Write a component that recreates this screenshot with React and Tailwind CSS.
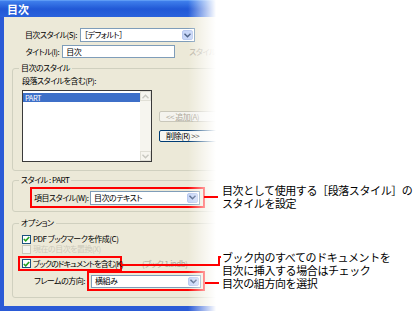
import React from "react";

const jp = "font-['Noto_Sans_CJK_JP',sans-serif]";
const palt = "[font-feature-settings:'palt']";

function Chevron({ up, color = "#4d6185" }) {
  return (
    <svg width="7" height="5" viewBox="0 0 7 5">
      <path
        d={up ? "M0.5 4.2 L3.5 1.2 L6.5 4.2" : "M0.5 0.8 L3.5 3.8 L6.5 0.8"}
        fill="none"
        stroke={color}
        strokeWidth="1.4"
      />
    </svg>
  );
}

function Select({ w, text, h = "h-[14px]" }) {
  return (
    <div className={`flex ${h} ${w} shrink-0 items-center border border-[#7f9db9] bg-white`}>
      <span className="flex-1 pl-[3px] whitespace-nowrap text-black">{text}</span>
      <span className="mr-[1px] flex h-[calc(100%-2px)] w-[11px] items-center justify-center rounded-[2px] border border-[#b9c9ef] bg-[#c7d6f8]">
        <Chevron />
      </span>
    </div>
  );
}

function Check({ on, disabled }) {
  return (
    <span
      className={`flex h-[9px] w-[9px] shrink-0 items-center justify-center border ${
        disabled ? "border-[#cac8bb] bg-[#f4f3ee]" : "border-[#1c5180] bg-white"
      }`}
    >
      {on && (
        <svg width="7" height="6" viewBox="0 0 7 6">
          <path d="M0.8 3 L2.7 4.8 L6.2 1" fill="none" stroke="#21a121" strokeWidth="1.6" />
        </svg>
      )}
    </span>
  );
}

// group box: title sits on the top border
function Group({ title, className, children }) {
  return (
    <div className={`ml-[8px] w-[240px] shrink-0 rounded-[3px] border border-[#d0d0bf] pl-[6px] ${className}`}>
      <div className="-mt-[6px] h-[10px] w-fit bg-[#ece9d8] px-[2px] whitespace-nowrap text-black">{title}</div>
      {children}
    </div>
  );
}

export default function App() {
  return (
    <div className={`relative flex h-[311px] w-[416px] overflow-hidden bg-white ${jp}`}>
      <div className="relative flex h-full w-[216px] shrink-0 flex-col overflow-hidden">
        <div className="flex h-[17px] shrink-0 items-center border-t border-[#5d9bf5] bg-linear-to-b from-[#3f7fec] via-[#2158d6] to-[#2a62dc] pl-[7px] text-[11px] font-bold text-white">
          目次
        </div>
        <div
          className={`flex flex-1 flex-col border-b-[5px] border-l-4 border-[#2a5ad6] bg-[#ece9d8] text-[8px] leading-[10px] tracking-[-0.5px] ${palt}`}
        >
          <div className="mt-[11px] flex items-center">
            <span className="w-[76px] pr-[3px] text-right whitespace-nowrap">目次スタイル(S):</span>
            <Select w="w-[115px]" text="［デフォルト］" />
          </div>
          <div className="mt-[3px] flex items-center">
            <span className="w-[76px] pr-[3px] text-right whitespace-nowrap">タイトル(I):</span>
            <div className="flex h-[13px] w-[113px] shrink-0 items-center border border-[#7f9db9] bg-white pl-[3px]">目次</div>
            <span className="ml-[14px] whitespace-nowrap text-[#aca899]">スタイル</span>
          </div>

          <Group title="目次のスタイル" className="mt-[10px] pb-[8px]">
            <div className="pl-[3px]">
              <div className="mt-[3px] whitespace-nowrap">段落スタイルを含む(P):</div>
              <div className="mt-[4px] flex">
                <div className="flex h-[72px] w-[130px] border border-[#3a3a3a] bg-white">
                  <div className="flex-1">
                    <div className="mt-[2px] flex h-[9px] items-center bg-[#3d6fc8] pl-[2px] text-[7.5px] text-white">
                      PART
                    </div>
                  </div>
                  <div className="flex w-[11px] flex-col justify-between bg-[#f6f5ef]">
                    <span className="flex h-[10px] items-center justify-center border border-[#e0dfd6]">
                      <Chevron up color="#c8c8c0" />
                    </span>
                    <span className="flex h-[10px] items-center justify-center border border-[#e0dfd6]">
                      <Chevron color="#c8c8c0" />
                    </span>
                  </div>
                </div>
                <div className="ml-[7px] flex flex-col pt-[21px]">
                  <div className="flex h-[11px] w-[62px] items-center rounded-[2px] border border-[#c9c7ba] bg-[#f4f3ee] pl-[6px] whitespace-nowrap text-[#aca899]">
                    &lt;&lt; 追加(A)
                  </div>
                  <div className="mt-[8px] flex h-[12px] w-[62px] items-center rounded-[2px] border border-[#003c74] bg-[#f6f6f2] pl-[6px] whitespace-nowrap">
                    削除(R) &gt;&gt;
                  </div>
                </div>
              </div>
            </div>
          </Group>

          <Group title="スタイル : PART" className="mt-[9px] pb-[3px]">
            <div className="mt-[2px] ml-[11px] flex h-[21px] w-[175px] items-center border-2 border-[#ff0000] pl-[2px]">
              <span className="w-[56px] whitespace-nowrap">項目スタイル(W):</span>
              <Select w="w-[110px]" text="目次のテキスト" />
            </div>
          </Group>

          <Group title="オプション" className="mt-[11px] pb-[6px]">
            <div className="-ml-[1px]">
              <div className="mt-[6px] ml-[4px] flex h-[10px] items-center gap-[2px]">
                <Check on />
                <span className="whitespace-nowrap">PDF ブックマークを作成(C)</span>
              </div>
              <div className="ml-[4px] flex h-[10px] items-center gap-[2px] text-[#cdcabb]">
                <Check disabled />
                <span className="whitespace-nowrap">現在の目次を置換(X)</span>
              </div>
              <div className="mt-[2px] flex items-center">
                <div className="flex h-[15px] w-[104px] items-center gap-[2px] border-2 border-[#ff0000] pl-[2px]">
                  <Check on />
                  <span className="whitespace-nowrap tracking-[-0.8px]">ブックのドキュメントを含む(K)</span>
                </div>
                <span className="ml-[20px] whitespace-nowrap text-[#aca899]">(ブック 1.indb)</span>
              </div>
              <div className="flex items-center">
                <span className="w-[69px] pr-[2px] text-right whitespace-nowrap">フレームの方向:</span>
                <div className="flex h-[20px] w-[118px] items-center border-2 border-[#ff0000] pl-[2px]">
                  <Select w="w-[110px]" h="h-[13px]" text="横組み" />
                </div>
              </div>
            </div>
          </Group>
        </div>
        <div className="pointer-events-none absolute inset-y-0 right-0 w-[28px] bg-linear-to-r from-white/0 to-white" />
      </div>

      <svg className="absolute inset-0" width="416" height="311">
        <g fill="none" stroke="#ff0000" strokeWidth="2">
          <path d="M204 197 H218" />
          <path d="M121 265 H219 V257 H221" />
          <path d="M205 283 H219" />
        </g>
      </svg>

      <div className="absolute left-[222px] top-[184px] text-[11px] leading-[13px] tracking-[-0.4px] text-black">
        <div>目次として使用する［段落スタイル］の</div>
        <div>スタイルを設定</div>
      </div>
      <div className="absolute left-[222px] top-[251px] text-[11px] leading-[13px] tracking-[-0.4px] text-black">
        <div>ブック内のすべてのドキュメントを</div>
        <div>目次に挿入する場合はチェック</div>
        <div>目次の組方向を選択</div>
      </div>
    </div>
  );
}
